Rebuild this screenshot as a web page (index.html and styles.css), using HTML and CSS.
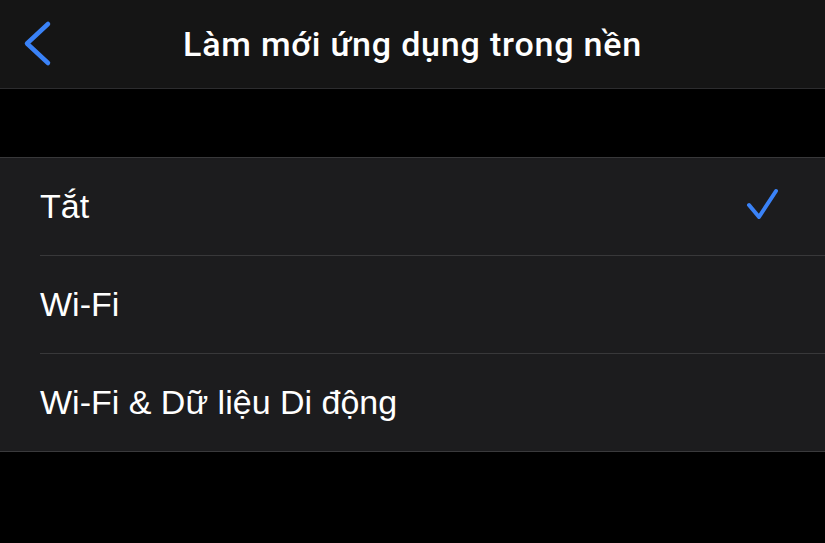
FILE: index.html
```html
<!DOCTYPE html>
<html lang="vi">
  <head>
    <meta charset="UTF-8" />
    <meta name="viewport" content="width=device-width, initial-scale=1.0" />
    <title>Làm mới ứng dụng trong nền</title>
    <link rel="stylesheet" href="styles.css">
  </head>
  <body>
    <div class="app">
      <header class="navbar">
        <button class="back" aria-label="Quay lại">
          <svg width="34" height="52" viewBox="0 0 34 52">
            <path d="M28 6 L7 25.5 L28 45" fill="none" stroke="#3a82f7" stroke-width="4.5" stroke-linecap="round" stroke-linejoin="round" />
          </svg>
        </button>
        <h1>Làm mới ứng dụng trong nền</h1>
      </header>
      <div class="spacer"></div>
      <ul class="opciones">
        <li class="opcion">
          <span>Tắt</span>
          <svg class="check" width="36" height="34" viewBox="0 0 36 34">
            <path d="M4 17 L14 29 L31 3" fill="none" stroke="#3a82f7" stroke-width="4" stroke-linecap="round" stroke-linejoin="round" />
          </svg>
        </li>
        <li class="opcion"><span>Wi-Fi</span></li>
        <li class="opcion"><span>Wi-Fi &amp; Dữ liệu Di động</span></li>
      </ul>
    </div>
  </body>
</html>
```

FILE: styles.css
```css
body {
  margin: 0;
  background: #000;
  font-family: "Liberation Sans", Arial, sans-serif;
  color: #fff;
}
.app {
  width: 825px;
  height: 543px;
  overflow: hidden;
}
.navbar {
  height: 88px;
  background: #151515;
  border-bottom: 1px solid #2c2c2e;
  display: flex;
  align-items: center;
  justify-content: center;
  position: relative;
}
.back {
  position: absolute;
  left: 20px;
  top: 18px;
  background: none;
  border: none;
  padding: 0;
  display: flex;
}
.navbar h1 {
  margin: 0;
  font-family: Roboto, "Liberation Sans", sans-serif;
  font-size: 34px;
  font-weight: 500;
  letter-spacing: 0.8px;
}
.spacer {
  height: 68px;
  border-bottom: 1px solid #38383a;
}
.opciones {
  list-style: none;
  margin: 0;
  padding: 0 0 0 40px;
  background: #1c1c1e;
  border-bottom: 1px solid #3a3a3c;
}
.opcion {
  height: 97px;
  display: flex;
  align-items: center;
  justify-content: space-between;
  padding-right: 44px;
  font-size: 34px;
  border-bottom: 1px solid #38383a;
}
.opcion:last-child {
  border-bottom: none;
}
.check {
  margin-top: -4px;
}
```
